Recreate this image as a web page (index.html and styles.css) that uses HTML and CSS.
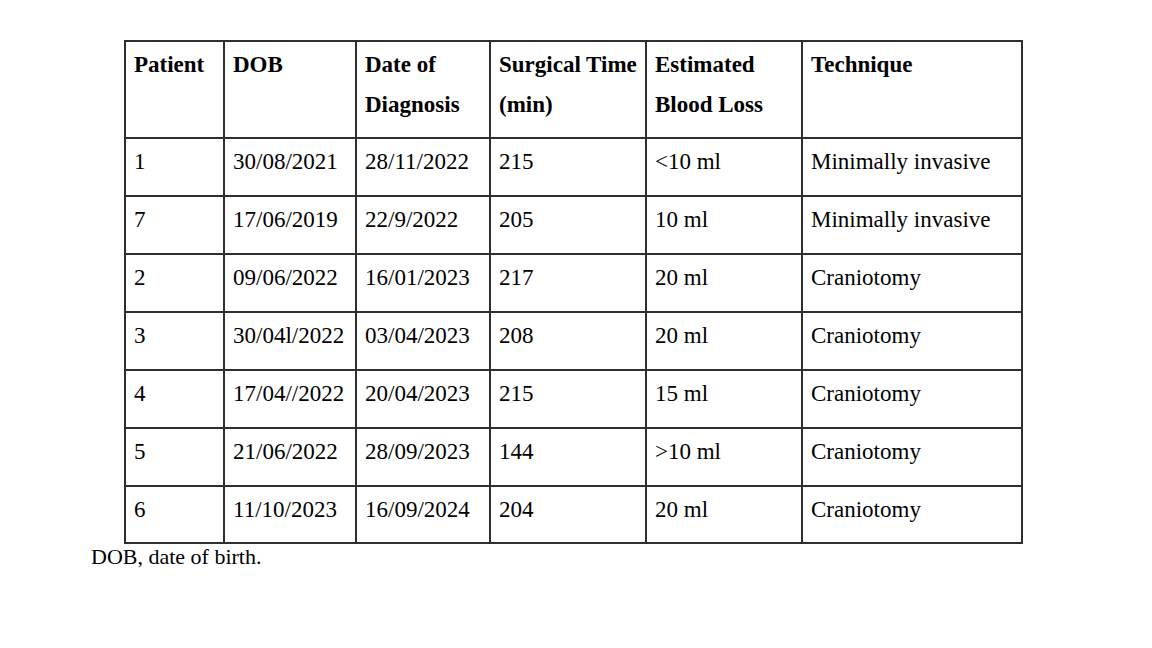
FILE: index.html
```html
<!DOCTYPE html>
<html>
<head>
<meta charset="utf-8">
<link rel="stylesheet" href="styles.css">
</head>
<body>
<div class="page">
<table class="data">
<colgroup>
<col class="c1"><col class="c2"><col class="c3"><col class="c4"><col class="c5"><col class="c6">
</colgroup>
<thead>
<tr class="head">
<th>Patient</th><th>DOB</th><th>Date of Diagnosis</th><th>Surgical Time (min)</th><th>Estimated Blood Loss</th><th>Technique</th>
</tr>
</thead>
<tbody>
<tr><td>1</td><td>30/08/2021</td><td>28/11/2022</td><td>215</td><td>&lt;10 ml</td><td>Minimally invasive</td></tr>
<tr><td>7</td><td>17/06/2019</td><td>22/9/2022</td><td>205</td><td>10 ml</td><td>Minimally invasive</td></tr>
<tr><td>2</td><td>09/06/2022</td><td>16/01/2023</td><td>217</td><td>20 ml</td><td>Craniotomy</td></tr>
<tr><td>3</td><td>30/04l/2022</td><td>03/04/2023</td><td>208</td><td>20 ml</td><td>Craniotomy</td></tr>
<tr><td>4</td><td>17/04//2022</td><td>20/04/2023</td><td>215</td><td>15 ml</td><td>Craniotomy</td></tr>
<tr><td>5</td><td>21/06/2022</td><td>28/09/2023</td><td>144</td><td>&gt;10 ml</td><td>Craniotomy</td></tr>
<tr class="last"><td>6</td><td>11/10/2023</td><td>16/09/2024</td><td>204</td><td>20 ml</td><td>Craniotomy</td></tr>
</tbody>
</table>
<p class="note">DOB, date of birth.</p>
</div>
</body>
</html>
```

FILE: styles.css
```css
html, body {
  margin: 0;
  padding: 0;
  background: #ffffff;
}
body {
  width: 1152px;
  height: 648px;
  overflow: hidden;
  font-family: "Liberation Serif", "Times New Roman", serif;
  color: #000;
}
.page {
  padding-top: 40px;
}
.data {
  margin-left: 124px;
  border-collapse: collapse;
  table-layout: fixed;
  width: 899px;
  font-size: 23px;
  line-height: 40px;
}
.c1 { width: 99px; }
.c2 { width: 132px; }
.c3 { width: 134px; }
.c4 { width: 156px; }
.c5 { width: 156px; }
.c6 { width: 220px; }
.data th,
.data td {
  border: 2px solid #2f2f2f;
  padding: 3px 0 0 8px;
  text-align: left;
  vertical-align: top;
  white-space: normal;
}
.data th {
  font-weight: bold;
}
.head { height: 97px; }
.data tbody tr { height: 58px; }
.data tbody tr.last { height: 57px; }
.note {
  margin: 0 0 0 91px;
  font-size: 22px;
  line-height: 26px;
  padding-top: 0;
}
```
